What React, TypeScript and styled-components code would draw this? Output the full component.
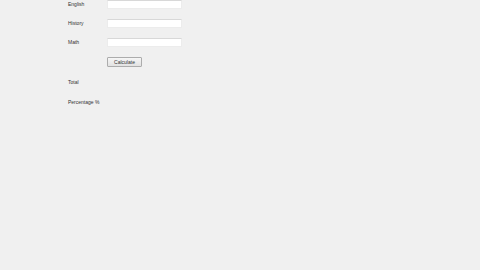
import React from "react";
import styled, { createGlobalStyle } from "styled-components";

const GlobalStyle = createGlobalStyle`
  html, body {
    margin: 0;
    padding: 0;
    background: #f0f0f0;
  }
  body {
    width: 480px;
    height: 270px;
    overflow: hidden;
    font-family: "Liberation Sans", Arial, sans-serif;
  }
`;

const Form = styled.div`
  display: grid;
  grid-template-columns: 39px 75px;
  grid-auto-rows: 19px;
  padding-left: 68px;
`;

const Label = styled.span`
  display: flex;
  align-items: center;
  height: 8px;
  font-size: 5px;
  color: #333;
  white-space: nowrap;
`;

const TextBox = styled.input`
  box-sizing: border-box;
  width: 75px;
  height: 9px;
  margin: 0;
  padding: 0;
  border: 1px solid #ececec;
  border-top-color: #d8d8d8;
  background: #ffffff;
  outline: none;
`;

const ButtonCell = styled.div`
  grid-column: 2;
  display: flex;
  align-items: flex-start;
`;

const Button = styled.button`
  box-sizing: border-box;
  width: 35px;
  height: 10px;
  margin: 0;
  padding: 0;
  border: 1px solid #acacac;
  border-radius: 1px;
  background: linear-gradient(#f6f6f6, #e2e2e2);
  font-family: "Liberation Sans", Arial, sans-serif;
  font-size: 5px;
  color: #333;
  line-height: 8px;
`;

const ResultRow = styled.div<{ $top: number }>`
  grid-column: 1 / span 2;
  padding-top: ${({ $top }) => $top}px;
`;

export default function App() {
  return (
    <>
      <GlobalStyle />
      <Form>
        <Label>English</Label>
        <TextBox />
        <Label>History</Label>
        <TextBox />
        <Label>Math</Label>
        <TextBox />
        <ButtonCell>
          <Button>Calculate</Button>
        </ButtonCell>
        <ResultRow $top={2}>
          <Label>Total</Label>
        </ResultRow>
        <ResultRow $top={3}>
          <Label>Percentage %</Label>
        </ResultRow>
      </Form>
    </>
  );
}
